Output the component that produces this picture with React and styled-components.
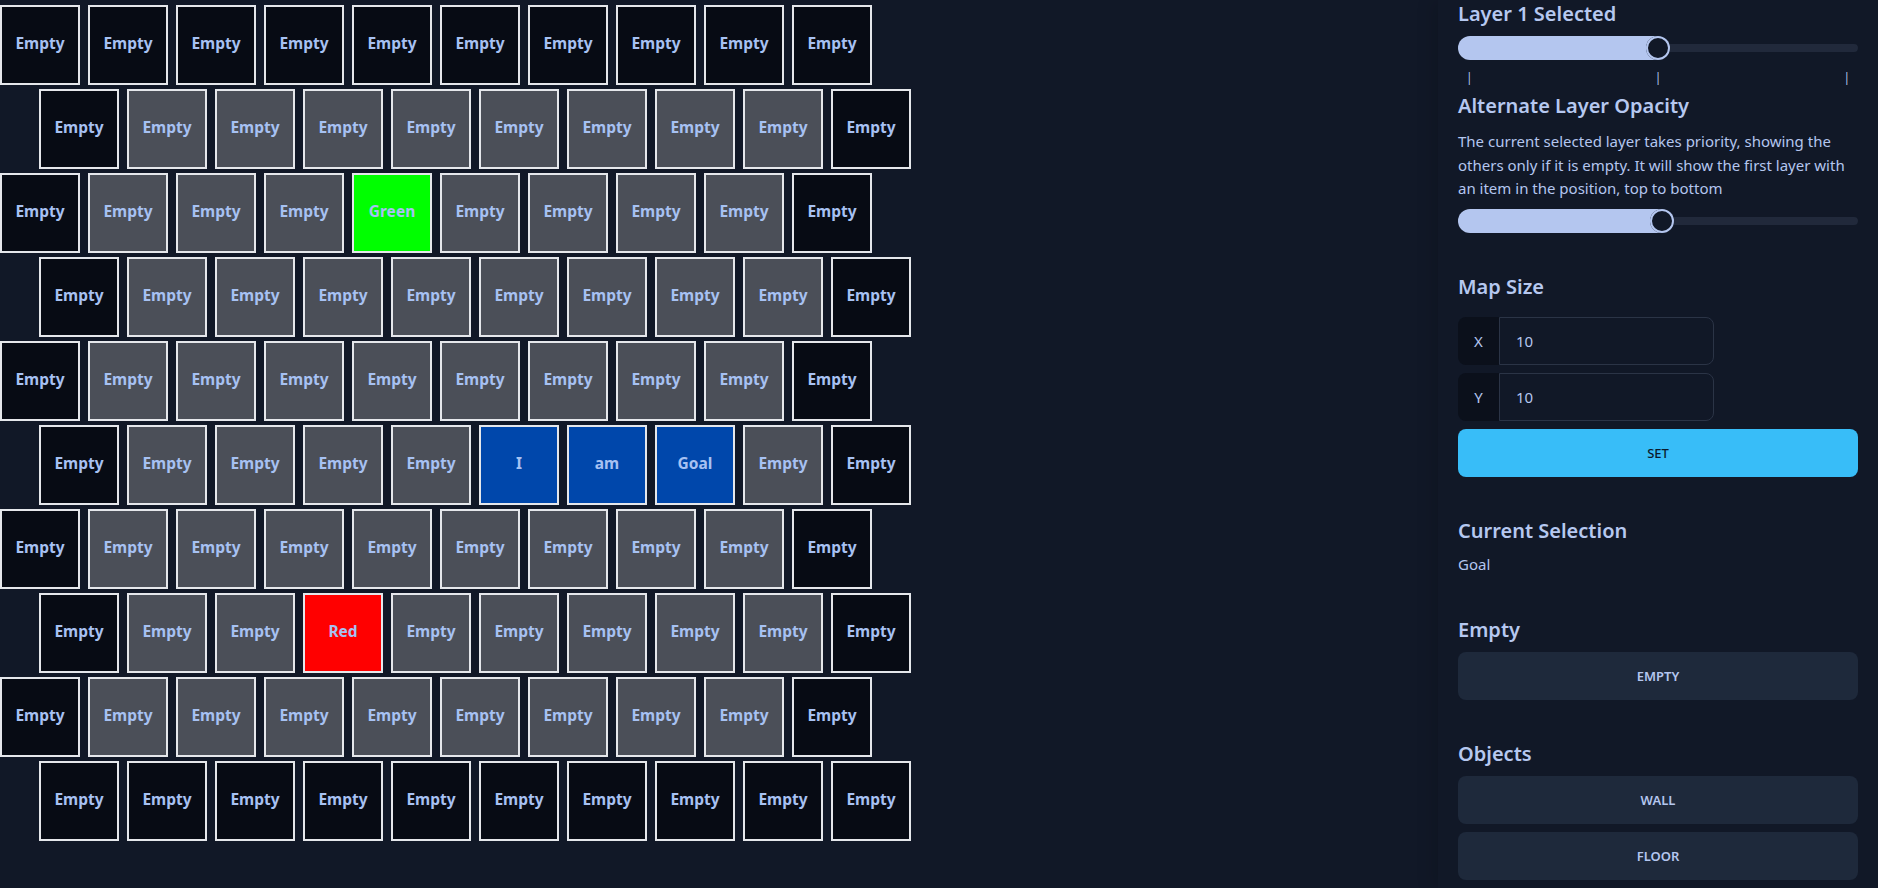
import React, { useState } from "react";
import styled, { createGlobalStyle } from "styled-components";

const GlobalStyle = createGlobalStyle`
  html, body {
    margin: 0;
    padding: 0;
    background: #111827;
  }
  body {
    font-family: "Noto Sans", "Open Sans", sans-serif;
    color: #b4c6ef;
    overflow: hidden;
  }
`;

const SIZE = 10;

const special = {
	"2-4": { label: "Green", bg: "#00ff00" },
	"7-3": { label: "Red", bg: "#ff0000" },
	"5-5": { label: "I", bg: "#0047ab" },
	"5-6": { label: "am", bg: "#0047ab" },
	"5-7": { label: "Goal", bg: "#0047ab" },
};

const buildMap = () => {
	const rows = [];
	for (let y = 0; y < SIZE; y++) {
		const row = [];
		for (let x = 0; x < SIZE; x++) {
			const edge = y === 0 || y === SIZE - 1 || x === 0 || x === SIZE - 1;
			const item = special[`${y}-${x}`];
			if (item) row.push(item);
			else row.push({ label: "Empty", bg: edge ? "#070b14" : "#4b4f58" });
		}
		rows.push(row);
	}
	return rows;
};

const App = () => {
	const [layer, setLayer] = useState(1);
	const [opacity, setOpacity] = useState(0.51);
	const [size, setSize] = useState({ x: 10, y: 10 });
	const map = buildMap();

	return (
		<>
			<GlobalStyle />
			<Page>
				<Board>
					{map.map((row, y) => (
						<Row key={y} $shift={y % 2 === 1}>
							{row.map((cell, x) => (
								<Tile key={x} $bg={cell.bg}>
									{cell.label}
								</Tile>
							))}
						</Row>
					))}
				</Board>

				<Sidebar>
					<Group>
						<Heading>Layer {layer} Selected</Heading>
						<Range
							type="range"
							min={0}
							max={2}
							step={1}
							value={layer}
							onChange={(e) => setLayer(Number(e.target.value))}
						/>
						<Ticks>
							<span>|</span>
							<span>|</span>
							<span>|</span>
						</Ticks>
						<Heading>Alternate Layer Opacity</Heading>
						<Text $top={2}>
							The current selected layer takes priority, showing the others only
							if it is empty. It will show the first layer with an item in the
							position, top to bottom
						</Text>
						<Range
							type="range"
							min={0}
							max={1}
							step={0.01}
							value={opacity}
							onChange={(e) => setOpacity(Number(e.target.value))}
						/>
					</Group>

					<Group>
						<Heading>Map Size</Heading>
						<Join $top={8}>
							<JoinLabel>X</JoinLabel>
							<NumberInput
								type="text"
								value={size.x}
								onChange={(e) => setSize({ ...size, x: e.target.value })}
							/>
						</Join>
						<Join>
							<JoinLabel>Y</JoinLabel>
							<NumberInput
								type="text"
								value={size.y}
								onChange={(e) => setSize({ ...size, y: e.target.value })}
							/>
						</Join>
						<Button $primary>Set</Button>
					</Group>

					<Group>
						<Heading>Current Selection</Heading>
						<Text>Goal</Text>
					</Group>

					<Group>
						<Heading>Empty</Heading>
						<Button>Empty</Button>
					</Group>

					<Group>
						<Heading>Objects</Heading>
						<Button>Wall</Button>
						<Button>Floor</Button>
					</Group>
				</Sidebar>
			</Page>
		</>
	);
};

const Page = styled.div`
	display: flex;
	height: 100vh;
	overflow: hidden;
	background: #111827;
`;

const Board = styled.main`
	flex: 1;
	display: flex;
	flex-direction: column;
	gap: 4px;
	padding-top: 5px;
`;

const Row = styled.div`
	display: flex;
	gap: 8px;
	padding-left: ${(p) => (p.$shift ? "39px" : "0")};
`;

const Tile = styled.button`
	width: 80px;
	height: 80px;
	box-sizing: border-box;
	flex-shrink: 0;
	padding: 0 0 4px;
	border: 2px solid #e5e7eb;
	background: ${(p) => p.$bg};
	color: #a7c1f2;
	font-family: "Noto Sans", sans-serif;
	font-size: 15.5px;
	font-weight: 700;
	display: flex;
	align-items: center;
	justify-content: center;
`;

const Sidebar = styled.aside`
	width: 440px;
	flex-shrink: 0;
	box-sizing: border-box;
	padding: 0 20px;
	display: flex;
	flex-direction: column;
	gap: 40px;
	overflow: hidden;
	box-shadow: -6px 0 16px rgba(0, 0, 0, 0.12);
`;

const Group = styled.section`
	display: flex;
	flex-direction: column;
	gap: 8px;
`;

const Heading = styled.h2`
	margin: 0;
	font-size: 20px;
	line-height: 28px;
	font-weight: 600;
	color: #b6c8f0;
`;

const Text = styled.p`
	margin: ${(p) => p.$top || 0}px 0 0;
	font-size: 15px;
	line-height: 23.5px;
	color: #b4c6ef;
`;

const Range = styled.input`
	-webkit-appearance: none;
	appearance: none;
	width: 100%;
	height: 24px;
	margin: 0;
	background: transparent;
	border-radius: 12px;
	overflow: hidden;
	cursor: pointer;

	&::-webkit-slider-runnable-track {
		height: 8px;
		border-radius: 12px;
		background: rgba(180, 198, 239, 0.1);
	}

	&::-webkit-slider-thumb {
		-webkit-appearance: none;
		width: 24px;
		height: 24px;
		margin-top: -8px;
		border-radius: 50%;
		background: #111827;
		box-shadow: 0 0 0 2px #b4c6ef inset, -1612px 0 0 1600px #b4c6ef;
	}
`;

const Ticks = styled.div`
	display: flex;
	justify-content: space-between;
	padding: 0 8px;
	margin: 2px 0 -2px;
	font-size: 12px;
	line-height: 16px;
	color: #b4c6ef;
`;

const Join = styled.label`
	display: flex;
	height: 48px;
	margin-top: ${(p) => p.$top || 0}px;
`;

const JoinLabel = styled.span`
	width: 41px;
	display: flex;
	align-items: center;
	justify-content: center;
	background: #0b101b;
	border-radius: 8px 0 0 8px;
	font-size: 15px;
`;

const NumberInput = styled.input`
	width: 215px;
	height: 48px;
	box-sizing: border-box;
	padding: 0 16px;
	background: #111827;
	border: 1px solid #2b3446;
	border-radius: 0 8px 8px 0;
	color: #b4c6ef;
	font-family: "Noto Sans", sans-serif;
	font-size: 15px;
	outline: none;
`;

const Button = styled.button`
	width: 100%;
	height: 48px;
	border: none;
	border-radius: 8px;
	background: ${(p) => (p.$primary ? "#38bdf8" : "#1e293b")};
	color: ${(p) => (p.$primary ? "#0b1a2c" : "#b4c6ef")};
	font-family: "Noto Sans", sans-serif;
	font-size: 13px;
	font-weight: ${(p) => (p.$primary ? 500 : 600)};
	text-transform: uppercase;
	cursor: pointer;
`;

export default App;
